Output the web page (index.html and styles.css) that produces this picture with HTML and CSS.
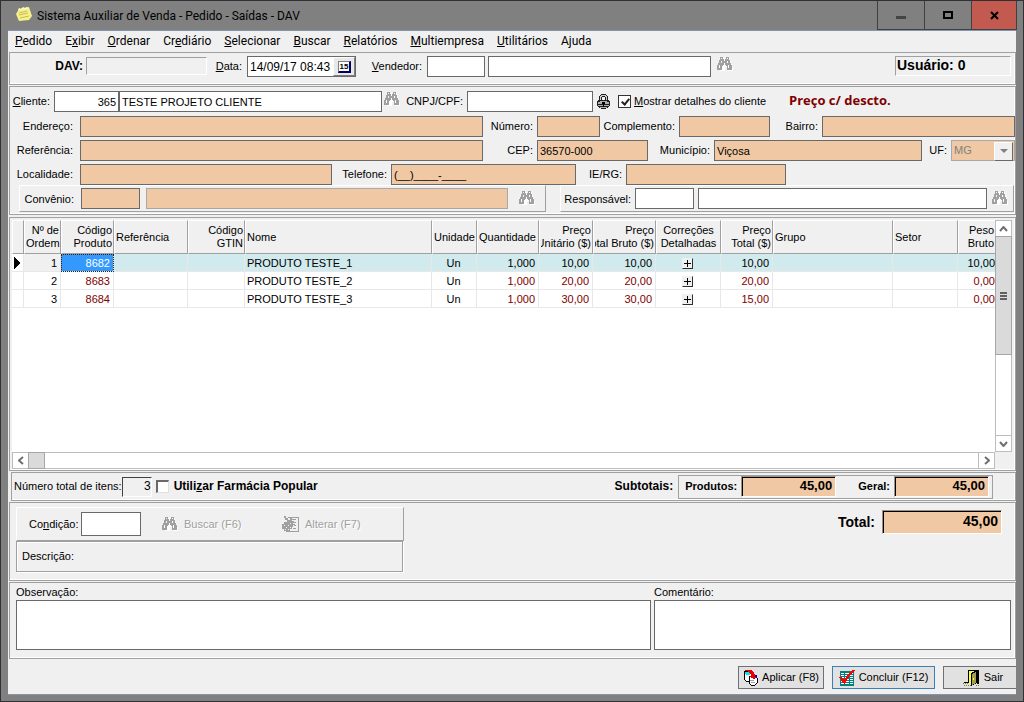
FILE: index.html
```
<!DOCTYPE html>
<html lang="pt-BR">
<head>
    <meta charset="UTF-8">
    <meta name="viewport" content="width=device-width, initial-scale=1.0">
    <title>Sistema Auxiliar de Venda - Pedido - Saídas - DAV</title>
    <link rel="stylesheet" href="styles.css">
</head>
<body>
    <svg class="defs" aria-hidden="true">
        <symbol id="binoculars" viewBox="0 0 16 14">
            <path fill="#fff" d="M5 1h3v2h2v-2h3v3h1v3h1v3h1v4h-5v-4h-3v4h-5v-1h-1v-4h2v-3h1z"/>
            <path fill="#a0a0a0" fill-rule="evenodd" d="M3 0h3v2h1v2h1v-2h1v-2h3v3h1v3h1v2h1v5h-5v-4h-1v-1h-3v1h-1v4h-5v-5h1v-2h1v-3h1zM4 1v1h1v-1zM10 1v1h1v-1zM4 4v2h1v-2zM10 4v2h1v-2zM2 8v3h1v-3zM11 8v3h1v-3zM7 6v2h1v-2z"/>
        </symbol>
    </svg>
    <div class="window">
        <header class="titlebar">
            <svg class="app-icon" width="16" height="16" viewBox="0 0 16 16">
                <path fill="#f5f08a" d="M3 2l10-2 3 9-3 4-10 1-3-7z"/>
                <path stroke="#c8bc50" d="M3 6l8-2M3 8l9-2M4 11l9-2" fill="none"/>
                <path fill="#fffbd0" d="M2 3l1-2 2 1 2-2 2 1 2-1 1 1v1z"/>
            </svg>
            <h1>Sistema Auxiliar de Venda - Pedido - Saídas - DAV</h1>
            <button class="win-btn" aria-label="Minimizar"><svg width="10" height="10"><path fill="#444" d="M0 6h10v3H0z"/></svg></button>
            <button class="win-btn" aria-label="Maximizar"><svg width="10" height="10"><path d="M1 2h8v6H1z" fill="none" stroke="#000" stroke-width="2"/></svg></button>
            <button class="win-btn close" aria-label="Fechar"><svg width="9" height="9"><path d="M1 1l7 7M8 1L1 8" stroke="#000" stroke-width="2"/></svg></button>
        </header>
        <main class="client">
            <nav class="menu">
                <a href="#"><u>P</u>edido</a>
                <a href="#">E<u>x</u>ibir</a>
                <a href="#"><u>O</u>rdenar</a>
                <a href="#">Cr<u>e</u>diário</a>
                <a href="#"><u>S</u>elecionar</a>
                <a href="#"><u>B</u>uscar</a>
                <a href="#"><u>R</u>elatórios</a>
                <a href="#"><u>M</u>ultiempresa</a>
                <a href="#"><u>U</u>tilitários</a>
                <a href="#">A<u>j</u>uda</a>
            </nav>

            <section class="panel row-dav">
                <label for="dav" class="bold">DAV:</label>
                <output id="dav" class="sunken"></output>
                <label for="data"><u>D</u>ata:</label>
                <div class="date-field">
                    <input id="data" class="field" value="14/09/17 08:43">
                    <button class="calendar" aria-label="Calendário"><span>15</span></button>
                </div>
                <label for="vendedor"><u>V</u>endedor:</label>
                <input id="vendedor" class="field">
                <input class="field vendedor-nome" aria-label="Nome do vendedor">
                <button class="icon-btn" aria-label="Buscar vendedor"><svg width="16" height="14"><use href="#binoculars"/></svg></button>
                <div class="sunken usuario">Usuário: 0</div>
            </section>

            <section class="panel cliente">
                <div class="row row-cliente">
                    <label for="cliente"><u>C</u>liente:</label>
                    <input id="cliente" class="field num" value="365">
                    <input class="field" aria-label="Nome do cliente" value="TESTE PROJETO CLIENTE">
                    <button class="icon-btn" aria-label="Buscar cliente"><svg width="16" height="14"><use href="#binoculars"/></svg></button>
                    <label for="cnpj">CNPJ/CPF:</label>
                    <input id="cnpj" class="field">
                    <svg class="lock" width="13" height="15" viewBox="0 0 13 15">
                        <path fill="#202020" d="M4 0h5v1h1v1h1v4h1v1h1v5h-1v1h-1v1h-2v1h-5v-1h-2v-1h-1v-1h-1v-5h1v-1h1v-4h1v-1h1z"/>
                        <path fill="#d0d0d0" d="M4 1h5v1h1v4h-1v-3h-1v-1h-3v1h-1v3h-1v-4h1z"/>
                        <path fill="#f0f0f0" d="M5 3h3v3h-3z"/>
                        <path fill="#b0b0b0" d="M3 7h7v1h-7zM1 8h11v2h-11zM1 11h11v1h-11zM3 13h7v1h-7z"/>
                        <path d="M5 8h3v2h-1v3h-1v-3h-1z"/>
                    </svg>
                    <div class="check">
                        <input type="checkbox" id="detalhes" checked>
                        <label for="detalhes"><u>M</u>ostrar detalhes do cliente</label>
                    </div>
                    <strong class="preco">Preço c/ descto.</strong>
                </div>
                <div class="row row-endereco">
                    <label for="endereco">Endereço:</label>
                    <input id="endereco" class="field locked">
                    <label for="numero">Número:</label>
                    <input id="numero" class="field locked">
                    <label for="complemento">Complemento:</label>
                    <input id="complemento" class="field locked">
                    <label for="bairro">Bairro:</label>
                    <input id="bairro" class="field locked">
                </div>
                <div class="row row-referencia">
                    <label for="referencia">Referência:</label>
                    <input id="referencia" class="field locked">
                    <label for="cep">CEP:</label>
                    <input id="cep" class="field locked" value="36570-000">
                    <label for="municipio">Município:</label>
                    <input id="municipio" class="field locked" value="Viçosa">
                    <label for="uf">UF:</label>
                    <div class="combo">
                        <select id="uf" class="field locked" disabled><option>MG</option></select>
                    </div>
                </div>
                <div class="row row-localidade">
                    <label for="localidade">Localidade:</label>
                    <input id="localidade" class="field locked">
                    <label for="telefone">Telefone:</label>
                    <input id="telefone" class="field locked" value="(__)____-____">
                    <label for="ierg">IE/RG:</label>
                    <input id="ierg" class="field locked">
                </div>
                <div class="row-convenio">
                    <div class="raised convenio">
                        <label for="convenio">Convênio:</label>
                        <input id="convenio" class="field locked">
                        <input class="field locked dim" aria-label="Nome do convênio" disabled>
                        <button class="icon-btn" aria-label="Buscar convênio"><svg width="16" height="14"><use href="#binoculars"/></svg></button>
                    </div>
                    <div class="raised responsavel">
                        <label for="responsavel">Responsável:</label>
                        <input id="responsavel" class="field">
                        <input class="field" aria-label="Nome do responsável">
                        <button class="icon-btn" aria-label="Buscar responsável"><svg width="16" height="14"><use href="#binoculars"/></svg></button>
                    </div>
                </div>
            </section>

            <section class="panel itens">
                <div class="table-wrap">
                    <table>
                        <colgroup>
                            <col class="w-mark"><col class="w-ordem"><col class="w-codigo"><col class="w-ref"><col class="w-gtin">
                            <col class="w-nome"><col class="w-un"><col class="w-qtd"><col class="w-unit"><col class="w-bruto">
                            <col class="w-corr"><col class="w-total"><col class="w-grupo"><col class="w-setor"><col class="w-peso">
                        </colgroup>
                        <thead>
                            <tr>
                                <th></th>
                                <th class="r">Nº de<br>Ordem</th>
                                <th class="r">Código<br>Produto</th>
                                <th>Referência</th>
                                <th class="r">Código<br>GTIN</th>
                                <th>Nome</th>
                                <th>Unidade</th>
                                <th>Quantidade</th>
                                <th class="r"><div>Preço<br>Unitário ($)</div></th>
                                <th class="r"><div>Preço<br>Total Bruto ($)</div></th>
                                <th class="c">Correções<br>Detalhadas</th>
                                <th class="r">Preço<br>Total ($)</th>
                                <th>Grupo</th>
                                <th>Setor</th>
                                <th class="r peso">Peso<br>Bruto</th>
                            </tr>
                        </thead>
                        <tbody>
                            <tr class="current">
                                <td><svg width="6" height="12"><path d="M0 0l6 6-6 6z"/></svg></td>
                                <td class="r fixed">1</td><td class="r sel">8682</td><td></td><td></td><td>PRODUTO TESTE_1</td>
                                <td class="c">Un</td><td class="r">1,000</td><td class="r">10,00</td><td class="r">10,00</td>
                                <td class="c"><button class="plus" aria-label="Detalhar"></button></td>
                                <td class="r">10,00</td><td></td><td></td><td class="r">10,00</td>
                            </tr>
                            <tr>
                                <td></td>
                                <td class="r">2</td><td class="r red">8683</td><td></td><td></td><td>PRODUTO TESTE_2</td>
                                <td class="c">Un</td><td class="r red">1,000</td><td class="r red">20,00</td><td class="r red">20,00</td>
                                <td class="c"><button class="plus" aria-label="Detalhar"></button></td>
                                <td class="r red">20,00</td><td></td><td></td><td class="r red">0,00</td>
                            </tr>
                            <tr>
                                <td></td>
                                <td class="r">3</td><td class="r red">8684</td><td></td><td></td><td>PRODUTO TESTE_3</td>
                                <td class="c">Un</td><td class="r red">1,000</td><td class="r red">30,00</td><td class="r red">30,00</td>
                                <td class="c"><button class="plus" aria-label="Detalhar"></button></td>
                                <td class="r red">15,00</td><td></td><td></td><td class="r red">0,00</td>
                            </tr>
                        </tbody>
                    </table>
                </div>
                <div class="vscroll">
                    <button aria-label="Acima"><svg width="9" height="6"><path d="M1 5l3.500-4L8 5"/></svg></button>
                    <div class="thumb"><span></span><span></span><span></span></div>
                    <div class="track"></div>
                    <button aria-label="Abaixo"><svg width="9" height="6"><path d="M1 1l3.500 4L8 1"/></svg></button>
                </div>
                <div class="hscroll">
                    <button aria-label="Esquerda"><svg width="6" height="9"><path d="M5 1L1 4.500 5 8"/></svg></button>
                    <div class="thumb"></div>
                    <div class="track"></div>
                    <button aria-label="Direita"><svg width="6" height="9"><path d="M1 1l4 3.500L1 8"/></svg></button>
                </div>
            </section>

            <section class="panel resumo">
                <label for="itens">Número total de itens:</label>
                <output id="itens" class="sunken deep itens-total">3</output>
                <input type="checkbox" id="farmacia" class="classic">
                <label for="farmacia" class="bold farmacia">Utili<u>z</u>ar Farmácia Popular</label>
                <strong class="subtotais-label">Subtotais:</strong>
                <div class="subtotais">
                    <label for="produtos" class="bold">Produtos:</label>
                    <output id="produtos" class="amount">45,00</output>
                    <label for="geral" class="bold geral">Geral:</label>
                    <output id="geral" class="amount">45,00</output>
                </div>
            </section>

            <section class="panel pagamento">
                <div class="condicao-box">
                    <div class="raised condicao">
                        <label for="condicao">Co<u>n</u>dição:</label>
                        <input id="condicao" class="field">
                        <button class="flat" disabled><svg width="16" height="14"><use href="#binoculars"/></svg>Buscar (F6)</button>
                        <button class="flat" disabled>
                            <svg width="17" height="16" viewBox="0 0 17 16">
                                <path d="M6 1h10v14H4M8 3h6M11 6h3M12 9h2M11 12h3" fill="none" stroke="#a0a0a0"/>
                                <path d="M2 0h2v2h2v2h2V2h2v3h2v1h-1v2h2v1h-2v2h-1v2H8v2H2v-2H0V8h2V6h3V4H3V2H2z" fill="#a0a0a0"/>
                                <path d="M2 9h1M4 11h1M6 9h1M8 11h1M6 13h1M3 13h1M8 7h1" stroke="#f0f0f0"/>
                            </svg>Alterar (F7)</button>
                    </div>
                    <div class="descricao">Descrição:</div>
                </div>
                <label for="total" class="total-label">Total:</label>
                <output id="total" class="amount total">45,00</output>
            </section>

            <section class="panel notas">
                <div class="nota observacao">
                    <label for="obs">Observação:</label>
                    <textarea id="obs" class="field"></textarea>
                </div>
                <div class="nota comentario">
                    <label for="coment">Comentário:</label>
                    <textarea id="coment" class="field"></textarea>
                </div>
            </section>

            <footer class="actions">
                <button class="btn">
                    <svg width="15" height="16" viewBox="0 0 15 16">
                        <path d="M1 1h6l2 2v6l-2 2H3L1 9z" fill="#fff" stroke="#000"/>
                        <path d="M6 7l2-1h4l2 2v5l-2 2H8l-2-2z" fill="#fff" stroke="#000"/>
                        <path d="M2 2h5v3H3z" fill="#00e8e8"/>
                        <path d="M11 5h3v3h-3z" fill="#0000c0"/>
                        <path d="M1 0h7l3 2 1 3 1 3-2 1-4-2 1-2-2-3z" fill="#e80000"/>
                        <path d="M7 10h4M8 12h4" stroke="#a0a0a0"/>
                    </svg>Aplicar (F8)</button>
                <button class="btn default">
                    <svg width="16" height="16" viewBox="0 0 16 16">
                        <path fill="#008080" d="M1 1h14v15H1z"/>
                        <path fill="#fff" d="M2 3h3v1H2zM6 3h4v1H6zM11 3h3v1h-3zM2 5h3v1H2zM6 5h4v1H6zM11 5h3v1h-3zM2 7h3v1H2zM6 7h4v1H6zM11 7h3v1h-3zM2 9h3v1H2zM6 9h4v1H6zM11 9h3v1h-3zM2 11h3v1H2zM6 11h4v1H6zM11 11h3v1h-3zM2 13h3v1H2zM6 13h4v1H6zM11 13h3v1h-3z"/>
                        <path fill="#f00" d="M0 7h3l2 3 4-6 5-4h2l-5 5-5 9H5z"/>
                    </svg>Concluir (F12)</button>
                <button class="btn sair">
                    <svg width="17" height="16" viewBox="0 0 17 16">
                        <path d="M0 13h6M1 15h8M13 15h3" stroke="#808000" stroke-dasharray="1 1"/>
                        <path d="M1 12h5v1H1z"/>
                        <path d="M5 0h11v14h-2V1H6v12H5z"/>
                        <path d="M6 1h4v12H6z" fill="#ffff40"/>
                        <path d="M8 3l6-3v13l-6 3z"/>
                        <path d="M9 4l4-2v11l-4 2z" fill="#a0a050"/>
                        <path d="M10 8h1v2h-1z" fill="#ff0"/>
                    </svg>Sair</button>
            </footer>
        </main>
    </div>
</body>
</html>
```
FILE: styles.css
```
* {
    box-sizing: border-box;
}
body {
    margin: 0;
    font: 11px/13px "Liberation Sans", Arial, sans-serif;
    color: #000;
}
button, input, select, textarea {
    font: inherit;
    color: inherit;
    margin: 0;
    padding: 0;
    border-radius: 0;
}
svg {
    flex: none;
    shape-rendering: crispEdges;
}
.defs {
    display: none;
}
.window {
    display: flex;
    flex-direction: column;
    min-height: 100vh;
    background: #808080;
    border: 1px solid #303035;
    padding: 0 7px 6px;
}

/* barra de título */
.titlebar {
    display: flex;
    height: 29px;
    margin-right: -1px;
}
.app-icon {
    margin: 6px 5px 0 8px;
    shape-rendering: auto;
}
.titlebar h1 {
    flex: 1;
    margin: 0;
    font: 12px/30px Roboto, "Segoe UI", sans-serif;
}
.win-btn {
    display: flex;
    align-items: center;
    justify-content: center;
    width: 47px;
    background: none;
    border: 1px solid #404040;
    border-top: 0;
    border-right: 0;
}
.win-btn.close {
    width: 46px;
    background: #c25a50;
    border-right: 1px solid #404040;
}
.win-btn.close svg {
    shape-rendering: auto;
}

.client {
    flex: 1;
    display: flex;
    flex-direction: column;
    background: #f0f0f0;
    border-top: 1px solid #8496ab;
    border-bottom: 1px solid #8496ab;
    overflow: hidden;
}
.menu {
    display: flex;
    gap: 13px;
    height: 21px;
    padding-left: 7px;
    font: 12px/21px Roboto, "Segoe UI", sans-serif;
}
.menu a {
    color: #000;
    text-decoration: none;
}

/* painéis */
.panel {
    margin: 0 0 1px 1px;
    border: 1px solid #a0a0a0;
    box-shadow: inset -1px -1px #fff;
}
.sunken {
    border: 1px solid #a0a0a0;
    border-right-color: #fff;
    border-bottom-color: #fff;
}
.raised {
    border: 1px solid #fff;
    border-right-color: #a0a0a0;
    border-bottom-color: #a0a0a0;
}
.bold {
    font-weight: bold;
}
.field {
    width: 100%;
    min-width: 0;
    height: 21px;
    background: #fff;
    border: 1px solid #696969;
    padding: 0 2px;
}
.num {
    text-align: right;
}
.locked {
    background: #f0c8a4;
}
.dim {
    border-color: #a8a8a8;
}
.icon-btn {
    display: flex;
    justify-content: center;
    align-self: start;
    padding-top: 1px;
    background: none;
    border: 0;
}

.row-dav {
    display: grid;
    grid-template-columns: 76px 121px 40px 109px 71px 58px 223px 33px 1fr 116px;
    height: 33px;
    padding: 3px 4px 0 0;
}
.row-dav label {
    text-align: right;
    padding: 4px 5px 0 0;
}
.row-dav label.bold {
    font-size: 12px;
    padding-right: 3px;
}
.row-dav output {
    height: 18px;
    margin-top: 1px;
}
.vendedor-nome {
    margin-left: 3px;
    width: 223px;
}
.date-field {
    display: flex;
    height: 21px;
    border: 1px solid #696969;
    background: #fff;
}
.date-field .field {
    height: 19px;
    border: 0;
    font-size: 12px;
}
.calendar {
    flex: none;
    width: 22px;
    background: #e8e8e8;
    border: 1px solid #fff;
    border-right-color: #808080;
    border-bottom-color: #808080;
    padding-left: 4px;
}
.calendar span {
    display: block;
    width: 13px;
    height: 12px;
    background: #fff;
    border: 1px solid #808080;
    border-right: 2px solid #000060;
    border-bottom: 2px solid #000060;
    font: bold 8px/9px "Liberation Sans", Arial, sans-serif;
}
.usuario {
    grid-column: -2;
    height: 20px;
    font: bold 14px/17px "Liberation Sans", Arial, sans-serif;
    padding-left: 1px;
}

/* dados do cliente */
.cliente {
    height: 129px;
    padding-top: 4px;
}
.row {
    display: grid;
    height: 24px;
}
.row label {
    text-align: right;
    padding: 4px 4px 0 0;
    white-space: nowrap;
}
.row-endereco label:first-child,
.row-referencia label:first-child,
.row-localidade label:first-child {
    padding-right: 7px;
}
.row-cliente {
    grid-template-columns: 44px 65px 263px 19px 66px 126px 21px 172px 1fr;
    height: 25px;
}
.row-endereco {
    grid-template-columns: 70px 403px 54px 63px 79px 91px 52px 1fr;
}
.row-referencia {
    grid-template-columns: 70px 403px 54px 111px 66px 208px 29px 1fr;
}
.row-localidade {
    grid-template-columns: 70px 252px 59px 185px 50px 160px;
    height: 21px;
}
.lock {
    margin: 3px 0 0 4px;
}
.check {
    display: flex;
    gap: 3px;
    padding-left: 4px;
}
.check input {
    appearance: none;
    position: relative;
    width: 13px;
    height: 13px;
    margin-top: 4px;
    background: #fff;
    border: 1px solid #333;
}
.check input:checked::after {
    content: "";
    position: absolute;
    left: 4px;
    top: 1px;
    width: 3px;
    height: 6px;
    border: solid #222;
    border-width: 0 2px 2px 0;
    transform: rotate(40deg);
}
.preco {
    font: bold 13px/18px "Open Sans", Tahoma, sans-serif;
    color: #800000;
    padding-left: 3px;
}
.combo {
    position: relative;
}
.combo select {
    appearance: none;
    border-color: #a8a8a8;
    color: #808080;
    opacity: 1;
}
.combo::before {
    content: "";
    position: absolute;
    right: 2px;
    top: 2px;
    width: 17px;
    height: 17px;
    background: #f0f0f0;
    border: 1px solid #fff;
    border-right-color: #696969;
    border-bottom-color: #696969;
}
.combo::after {
    content: "";
    position: absolute;
    right: 7px;
    top: 9px;
    border: 4px solid transparent;
    border-top-color: #808080;
    border-bottom: 0;
}
.row-convenio {
    display: grid;
    grid-template-columns: 527px 1fr;
    gap: 14px;
    padding: 0 1px 0 9px;
}
.row-convenio .raised {
    display: grid;
    height: 27px;
    padding-top: 2px;
}
.row-convenio label {
    padding: 5px 4px 0 0;
    text-align: right;
}
.convenio {
    grid-template-columns: 61px 59px 362px 37px;
}
.convenio label:first-child {
    padding-right: 7px;
}
.convenio .dim {
    margin-left: 6px;
}
.convenio .icon-btn {
    padding: 3px 0 0 12px;
}
.responsavel {
    grid-template-columns: 74px 59px 1fr 26px;
}
.responsavel .field + .field {
    margin-left: 4px;
    width: calc(100% - 4px);
}
.responsavel .icon-btn {
    padding-top: 3px;
}

/* grade de itens */
.itens {
    flex: 1;
    display: grid;
    grid-template-columns: minmax(0, 1fr) 17px;
    grid-template-rows: 1fr 17px;
    margin-top: 1px;
    min-height: 200px;
    padding: 2px 3px 1px 2px;
}
.table-wrap {
    overflow: hidden;
    background: #fff;
}
table {
    table-layout: fixed;
    width: 987px;
    border-collapse: separate;
    border-spacing: 0;
}
.w-mark { width: 12px; }
.w-ordem { width: 37px; }
.w-codigo { width: 53px; }
.w-ref { width: 74px; }
.w-gtin { width: 57px; }
.w-nome { width: 187px; }
.w-un { width: 45px; }
.w-qtd { width: 62px; }
.w-unit { width: 54px; }
.w-bruto { width: 63px; }
.w-corr { width: 65px; }
.w-total { width: 52px; }
.w-grupo { width: 120px; }
.w-setor { width: 65px; }
.w-peso { width: 41px; }
th {
    height: 34px;
    padding: 0 1px;
    background: #f0f0f0;
    border: 1px solid #fff;
    border-right-color: #a0a0a0;
    border-bottom-color: #a0a0a0;
    font-weight: normal;
    text-align: left;
    overflow: hidden;
    white-space: nowrap;
}
/* textos largos são cortados pela esquerda */
th div {
    display: flex;
    justify-content: flex-end;
    overflow: hidden;
}
th.peso {
    padding-right: 4px;
}
td {
    height: 18px;
    padding: 0 3px 0 2px;
    border-right: 1px solid #e8e8e8;
    border-bottom: 1px solid #e8e8e8;
    white-space: nowrap;
    line-height: 16px;
}
td svg {
    display: block;
}
.r {
    text-align: right;
}
.c {
    text-align: center;
}
.red {
    color: #800000;
}
.current td {
    background: #d1eaee;
}
.current td:first-child {
    background: #fff;
}
.current td.fixed {
    background: #f0f0f0;
}
.current td.sel {
    background: #3399ff;
    color: #fff;
    outline: 1px dotted #402000;
    outline-offset: -1px;
}
.plus {
    display: block;
    width: 11px;
    height: 11px;
    margin: 2px auto 0;
    border: 1px solid #f0f0f0;
    border-right-color: #303030;
    border-bottom-color: #303030;
    background:
        linear-gradient(#000, #000) 50% 50% / 7px 1px no-repeat,
        linear-gradient(#000, #000) 50% 50% / 1px 7px no-repeat,
        #f0f0f0;
}
.vscroll, .hscroll {
    display: flex;
    background: #fff;
    border: 1px solid #bdbdbd;
}
.vscroll {
    flex-direction: column;
}
.vscroll button, .hscroll button {
    display: flex;
    align-items: center;
    justify-content: center;
    flex: none;
    width: 15px;
    height: 15px;
    background: #fff;
    border: 0;
}
.vscroll svg, .hscroll svg {
    fill: none;
    stroke: #707070;
    stroke-width: 2;
    shape-rendering: auto;
}
.track {
    flex: 1;
}
.vscroll .track {
    border-bottom: 1px solid #bdbdbd;
}
.hscroll .track {
    border-right: 1px solid #bdbdbd;
}
.thumb {
    background: #dadada;
    border: 1px solid #a6a6a6;
}
.vscroll .thumb {
    display: flex;
    flex-direction: column;
    align-items: center;
    justify-content: center;
    gap: 1px;
    height: 119px;
    margin: 0 -1px;
}
.thumb span {
    width: 7px;
    height: 2px;
    background: #606060;
}
.hscroll .thumb {
    width: 17px;
    margin: -1px 0;
}

.resumo {
    display: flex;
    align-items: center;
    height: 29px;
    margin-left: 3px;
    padding-left: 2px;
}
.deep {
    border-top-color: #404040;
    border-left-color: #404040;
}
.itens-total {
    width: 30px;
    height: 20px;
    margin-right: 4px;
    font-size: 12px;
    line-height: 16px;
    text-align: right;
}
.classic {
    appearance: none;
    width: 13px;
    height: 13px;
    background: #fff;
    border: 2px solid #696969;
    border-right: 1px solid #e0e0e0;
    border-bottom: 1px solid #e0e0e0;
}
.farmacia {
    flex: 1;
    padding-left: 5px;
}
.farmacia, .subtotais-label {
    font-size: 12px;
}
.subtotais {
    display: flex;
    height: 24px;
    margin: 0 22px 0 5px;
    padding: 0 3px 0 6px;
    border: 1px solid #a0a0a0;
    line-height: 20px;
}
.subtotais .amount {
    width: 95px;
    margin-left: 4px;
}
.subtotais .geral {
    margin-left: 22px;
}
.amount {
    height: 21px;
    background: #f0c8a4;
    border: 1px solid #a09080;
    border-right-color: #fff;
    border-bottom-color: #fff;
    box-shadow: inset 1px 1px #000;
    padding-right: 3px;
    font: bold 13px/18px "Liberation Sans", Arial, sans-serif;
    text-align: right;
}

/* condição de pagamento */
.pagamento {
    display: flex;
    height: 79px;
    padding: 4px 13px 0 6px;
}
.condicao-box {
    width: 388px;
    margin-right: auto;
}
.condicao {
    display: flex;
    align-items: center;
    height: 34px;
    padding-left: 12px;
}
.condicao label {
    width: 49px;
}
.condicao .field {
    width: 60px;
    height: 24px;
    margin-left: 3px;
}
.flat {
    display: flex;
    align-items: center;
    gap: 6px;
    width: 99px;
    margin-left: 21px;
    background: none;
    border: 0;
    color: #a0a0a0;
    text-shadow: 1px 1px #fff;
}
.descricao {
    height: 31px;
    margin-right: 1px;
    padding: 8px 5px;
    border: 1px solid #a0a0a0;
    box-shadow: inset 1px 1px #fff, 1px 1px #fff;
}
.total-label {
    font: bold 14px/18px "Liberation Sans", Arial, sans-serif;
    padding: 6px 7px 0 0;
}
.total {
    width: 120px;
    height: 24px;
    margin-top: 3px;
    font-size: 14px;
    line-height: 21px;
}

.notas {
    display: flex;
    gap: 3px;
    height: 77px;
    padding: 3px 4px 0 6px;
}
.nota {
    display: flex;
    flex-direction: column;
}
.observacao {
    flex: 635;
}
.comentario {
    flex: 357;
}
.nota label {
    height: 14px;
}
.nota .field {
    height: 50px;
    resize: none;
}

.actions {
    display: flex;
    justify-content: flex-end;
    gap: 8px;
    padding: 6px 0 5px;
}
.btn {
    display: flex;
    align-items: center;
    justify-content: center;
    gap: 4px;
    width: 86px;
    height: 23px;
    background: #e1e1e1;
    border: 1px solid #707070;
    white-space: nowrap;
}
.btn.default {
    width: 103px;
    border-color: #3c7fb1;
}
.btn.sair {
    width: 73px;
    padding-left: 6px;
    border-right: 0;
}
```
